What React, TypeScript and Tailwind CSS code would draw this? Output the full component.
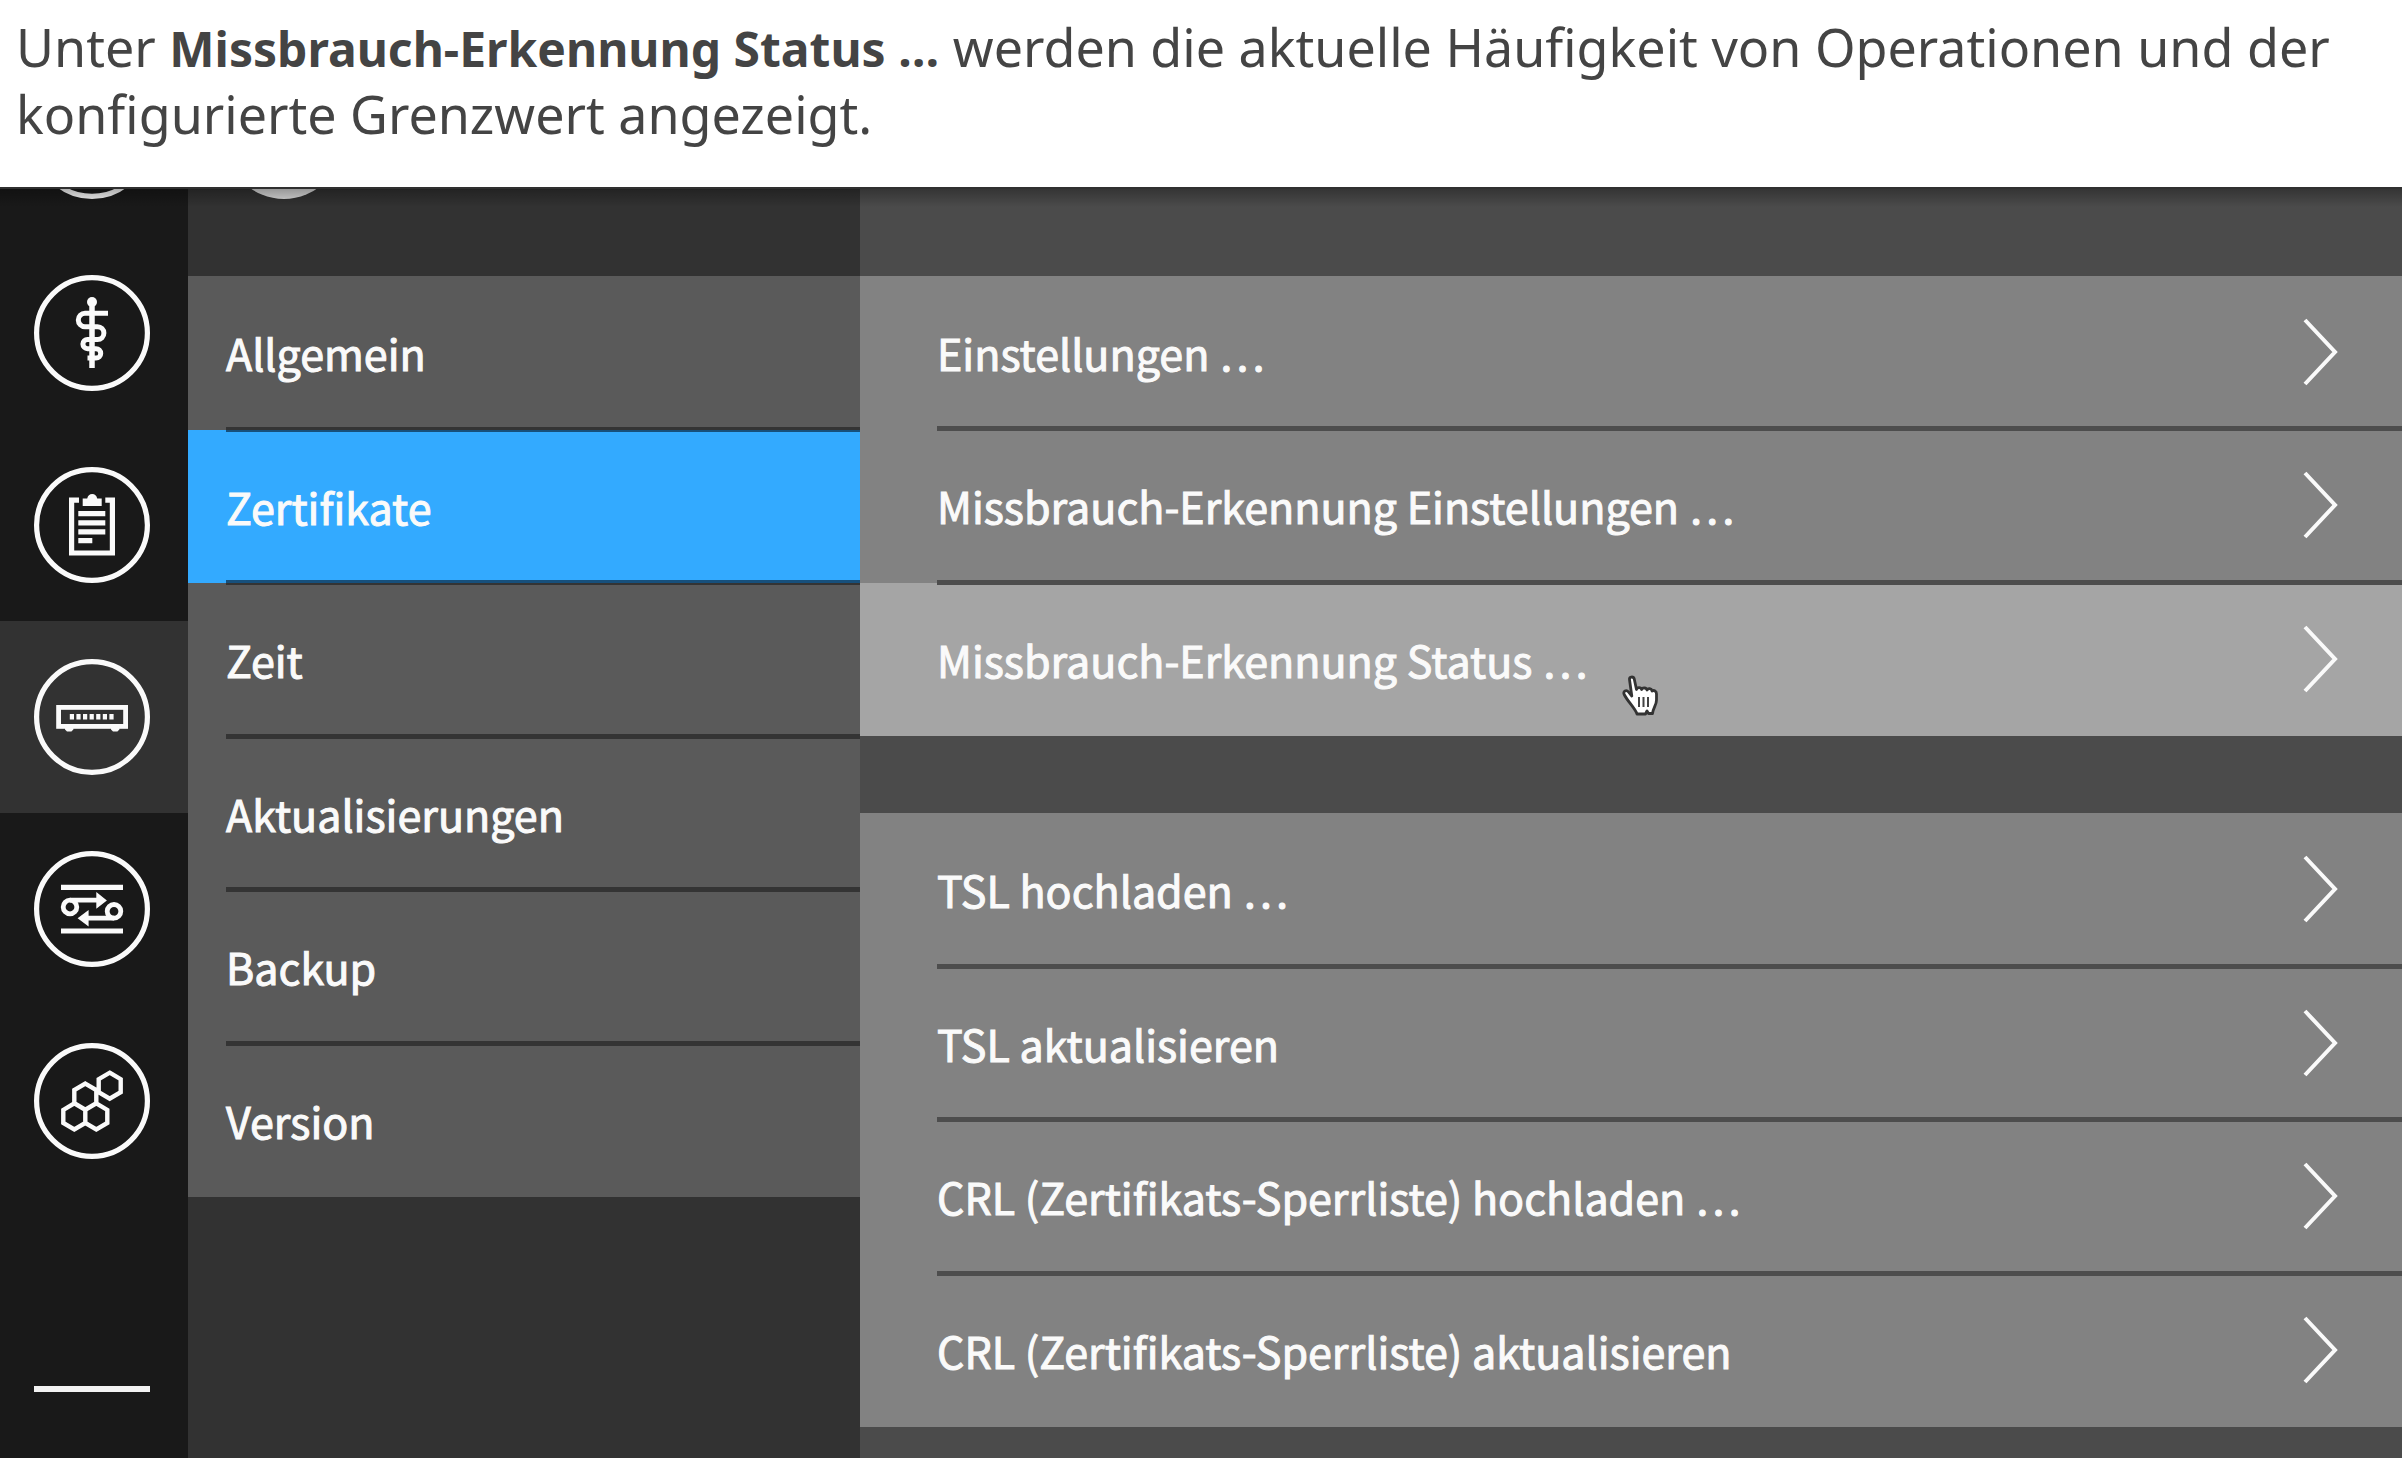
import type { ReactNode } from "react";

function RoundIcon({ children }: { children?: ReactNode }) {
  return (
    <svg viewBox="0 0 116 116" className="size-[116px] shrink-0" aria-hidden="true">
      <circle cx="58" cy="58" r="55.4" fill="none" stroke="currentColor" strokeWidth="5.2" />
      {children}
    </svg>
  );
}

const hexagon = (cx: number, cy: number) =>
  `M${cx} ${cy - 13}l11 6.5v13l-11 6.5l-11-6.5v-13z`;

const staffIcon = (
  <RoundIcon>
    <circle cx="58" cy="27" r="5" fill="currentColor" />
    <path d="M58 25V93" stroke="currentColor" strokeWidth="5.5" />
    <path
      d="M74 38.3H51a6.7 6.7 0 0 0 0 13.4H63.5a6.4 6.4 0 0 1 0 12.8H53.5a4.6 4.6 0 0 0 0 9.2H62a4.7 4.7 0 0 1 0 9.4H53.5"
      fill="none"
      stroke="currentColor"
      strokeWidth="5"
    />
  </RoundIcon>
);

const clipboardIcon = (
  <RoundIcon>
    <path d="M45 33.2H37.6V86H78.4V33.2H71.3" fill="none" stroke="currentColor" strokeWidth="5.2" />
    <path d="M48.7 39v-7.5h4.5q1-4.5 5-4.5t5 4.5h4.5V39z" fill="currentColor" />
    <path
      d="M44.3 46.7h27M44.3 55.8h27M44.3 64.9h27M44.3 73.6h14"
      stroke="currentColor"
      strokeWidth="5.2"
    />
  </RoundIcon>
);

const connectorIcon = (
  <RoundIcon>
    <rect x="24.6" y="48.4" width="67" height="19" fill="none" stroke="currentColor" strokeWidth="4.8" />
    <path d="M31 69h8.4v1.5l-2 2h-4.4l-2-2zM77 69h8.4v1.5l-2 2h-4.4l-2-2z" fill="currentColor" />
    <path d="M35.8 57.7h46" stroke="currentColor" strokeWidth="5.5" strokeDasharray="4.2 2.4" />
  </RoundIcon>
);

const transferIcon = (
  <RoundIcon>
    <path d="M27 36.3H89M27 80H89" stroke="currentColor" strokeWidth="5.2" />
    <g fill="none" stroke="currentColor" strokeWidth="4.8">
      <circle cx="36" cy="56" r="6.8" />
      <circle cx="80" cy="60.3" r="6.8" />
      <path d="M36 49.2H64M80 67.2H53" />
    </g>
    <path d="M62.3 41l10.6 8.4-10.6 8.4zM54.6 59l-11 8.2 11 8.2z" fill="currentColor" />
  </RoundIcon>
);

const modulesIcon = (
  <RoundIcon>
    <path
      d={[hexagon(75.7, 42.7), hexagon(51.3, 53.6), hexagon(40.3, 73.4), hexagon(62.3, 73.4)].join("")}
      fill="none"
      stroke="currentColor"
      strokeWidth="4.4"
    />
  </RoundIcon>
);

const navItems = [
  { label: "Praxis", icon: staffIcon },
  { label: "Protokoll", icon: clipboardIcon },
  { label: "System", icon: connectorIcon, active: true },
  { label: "Netzwerk", icon: transferIcon },
  { label: "Module", icon: modulesIcon },
];

const sections = ["Allgemein", "Zertifikate", "Zeit", "Aktualisierungen", "Backup", "Version"];
const checks = [
  "Einstellungen …",
  "Missbrauch-Erkennung Einstellungen …",
  "Missbrauch-Erkennung Status …",
];
const uploads = [
  "TSL hochladen …",
  "TSL aktualisieren",
  "CRL (Zertifikats-Sperrliste) hochladen …",
  "CRL (Zertifikats-Sperrliste) aktualisieren",
];

function HandPointer() {
  return (
    <svg
      viewBox="0 0 38 42"
      className="pointer-events-none absolute top-[92px] left-[761px] h-[42px] w-[38px]"
      aria-hidden="true"
    >
      <path
        d="M8.5 4.5C8 1.500 12.500 1 13.300 4.200L15.500 14.500C16 12 20 12 20.700 14.500C21.500 12.300 25.500 12.500 26 15C27 13 30.500 13.300 31 16C33 14.800 35.600 16 35.500 19V25C35.500 30 32.500 32 31.500 38.500H27.500L26 36L24.500 39H16C14 33 7 27 3.200 19.500C1.500 16 5.500 14.500 7.500 17L10.800 21Z"
        fill="#fff"
        stroke="#333"
        strokeWidth="2.8"
        strokeLinejoin="round"
      />
      <path d="M18 22v10M22.500 22v10M27 22v10" stroke="#444" strokeWidth="2" />
    </svg>
  );
}

function OptionGroup({
  items,
  active,
  height,
}: {
  items: string[];
  active?: string;
  height: string;
}) {
  return (
    <ul className={`grid shrink-0 auto-rows-fr ${height}`}>
      {items.map((item, i) => (
        <li key={item} className={item === active ? "relative bg-[#a5a5a5]" : "bg-[#828282]"}>
          <button type="button" className="flex size-full flex-col pl-[77px] text-left">
            <span className={i > 0 ? "h-[2px] w-full bg-[#4d4d4d]" : "h-[2px] w-full"} />
            <span className="flex w-full flex-1 items-center justify-between pr-16">
              {item}
              <svg viewBox="0 0 36 68" className="h-[68px] w-9" aria-hidden="true">
                <path d="M3 2L33 34L3 66" fill="none" stroke="currentColor" strokeWidth="4" />
              </svg>
            </span>
            <span
              className={i < items.length - 1 ? "h-[3px] w-full bg-[#4d4d4d]" : "h-[3px] w-full"}
            />
          </button>
          {item === active && <HandPointer />}
        </li>
      ))}
    </ul>
  );
}

export default function App() {
  return (
    <div className="flex h-screen flex-col overflow-hidden bg-white">
      <p className="px-4 pt-[13px] pb-10 font-['Noto_Sans','Open_Sans',sans-serif] text-[52px] leading-[67px] text-[#444]">
        Unter{" "}
        <strong className="text-[48px] leading-none font-bold">
          Missbrauch-Erkennung Status …
        </strong>
        {" werden die aktuelle Häufigkeit von Operationen und der "}
        {"konfigurierte Grenzwert angezeigt."}
      </p>

      <main className="relative flex min-h-0 flex-1 overflow-hidden font-['Noto_Sans_CJK_SC','Noto_Sans',sans-serif] text-[43px] leading-[64px] font-normal text-[#fafafa] [-webkit-text-stroke:1px_#fafafa]">
        <div className="pointer-events-none absolute inset-x-0 top-0 h-5 border-t-2 border-[#303030] bg-linear-to-b from-black/30 to-transparent" />

        <nav className="flex w-[188px] shrink-0 flex-col bg-[#191919]" aria-label="Hauptmenü">
          <div className="flex h-[50px] shrink-0 items-end overflow-hidden">
            <div className="flex h-48 w-[184px] shrink-0 items-center justify-center">
              <RoundIcon />
            </div>
          </div>
          {navItems.map((item) => (
            <button
              key={item.label}
              type="button"
              aria-label={item.label}
              className={
                item.active
                  ? "flex h-48 shrink-0 items-center bg-[#323232] pl-[34px]"
                  : "flex h-48 shrink-0 items-center pl-[34px]"
              }
            >
              {item.icon}
            </button>
          ))}
          <hr className="mt-auto mr-[38px] mb-[66px] ml-[34px] border-t-[6px] border-[#f2f2f2]" />
        </nav>

        <section className="flex w-[672px] shrink-0 flex-col bg-[#323232]">
          <div className="flex h-[89px] shrink-0 items-end overflow-hidden pb-[77px] pl-[38px]">
            <div className="size-[116px] shrink-0 rounded-full bg-[#dadada]" />
          </div>
          <ul className="grid h-[921px] shrink-0 auto-rows-fr">
            {sections.map((item, i) => {
              const active = item === "Zertifikate";
              const line = active ? "bg-[#17507c]" : "bg-[#343434]";
              return (
                <li key={item} className={active ? "bg-[#33aaff]" : "bg-[#5a5a5a]"}>
                  <button type="button" className="flex size-full flex-col pl-[38px] text-left">
                    <span className={`h-[2px] w-full ${i > 0 ? line : ""}`} />
                    <span className="flex flex-1 items-center">{item}</span>
                    <span className={`h-[3px] w-full ${i < sections.length - 1 ? line : ""}`} />
                  </button>
                </li>
              );
            })}
          </ul>
        </section>

        <section className="flex min-w-0 flex-1 flex-col gap-[77px] bg-[#4b4b4b] pt-[89px]">
          <OptionGroup items={checks} active="Missbrauch-Erkennung Status …" height="h-[460px]" />
          <OptionGroup items={uploads} height="h-[614px]" />
        </section>
      </main>
    </div>
  );
}
